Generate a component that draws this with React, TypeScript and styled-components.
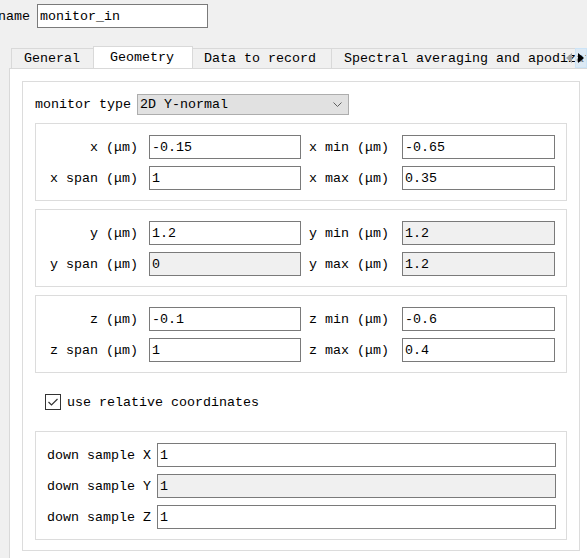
import React from "react";
import styled, { createGlobalStyle } from "styled-components";

const Global = createGlobalStyle`
  html, body { margin: 0; padding: 0; background: #f0f0f0; }
  body { overflow: hidden; }
`;

const Root = styled.div`
  width: 587px;
  height: 558px;
  overflow: hidden;
  background: #f0f0f0;
  font-family: "Liberation Mono", "DejaVu Sans Mono", monospace;
  font-size: 13.33px;
  color: #000;
`;

const NameRow = styled.div`
  display: flex;
  align-items: center;
  gap: 7px;
  padding-top: 4px;
  margin-left: -2px;
`;

const Label = styled.span<{ $align?: "left" | "right" }>`
  white-space: nowrap;
  text-align: ${(p) => p.$align ?? "left"};
`;

const TextInput = styled.div<{ $disabled?: boolean; $width?: number }>`
  box-sizing: border-box;
  height: 24px;
  width: ${(p) => (p.$width ? `${p.$width}px` : "auto")};
  border: 1px solid #7a7a7a;
  background: ${(p) => (p.$disabled ? "#f0f0f0" : "#ffffff")};
  padding: 0 2px;
  display: flex;
  align-items: center;
  white-space: nowrap;
  overflow: hidden;
`;

const TabWidget = styled.div`
  margin-top: 18px;
  margin-left: 9px;
`;

const TabBar = styled.div`
  position: relative;
  width: 578px;
  height: 22px;
  display: flex;
  align-items: flex-end;
  padding-left: 2px;
  box-sizing: border-box;
  overflow: hidden;
`;

const Tab = styled.div<{ $active?: boolean }>`
  position: relative;
  box-sizing: border-box;
  flex: none;
  display: flex;
  align-items: center;
  white-space: nowrap;
  border: 1px solid #d9d9d9;
  border-bottom: none;
  border-right: ${(p) => (p.$active ? "1px solid #d9d9d9" : "none")};
  background: ${(p) => (p.$active ? "#ffffff" : "#f0f0f0")};
  height: ${(p) => (p.$active ? "23px" : "20px")};
  margin: ${(p) => (p.$active ? "0 -2px -1px -2px" : "0")};
  padding: ${(p) => (p.$active ? "0 18px 2px 16px" : "0 15px 0 12px")};
  z-index: ${(p) => (p.$active ? 2 : 1)};
`;

const ScrollArrows = styled.div`
  position: absolute;
  right: 0;
  top: 2px;
  height: 20px;
  display: flex;
  align-items: center;
  z-index: 3;
`;

const ArrowButton = styled.div<{ $hover?: boolean }>`
  box-sizing: border-box;
  width: 12px;
  height: 20px;
  display: flex;
  align-items: center;
  justify-content: center;
  background: ${(p) => (p.$hover ? "rgba(204, 228, 247, 0.55)" : "transparent")};
  border: ${(p) => (p.$hover ? "1px solid #cce4f7" : "none")};
`;

const Pane = styled.div`
  box-sizing: border-box;
  width: 584px;
  border: 1px solid #d9d9d9;
  background: #ffffff;
  padding: 12px;
`;

const Frame = styled.div`
  box-sizing: border-box;
  width: 558px;
  border: 1px solid #dcdcdc;
  padding: 12px 12px 10px 12px;
`;

const TypeRow = styled.div`
  display: flex;
  align-items: center;
  gap: 6px;
  height: 21px;
  margin-bottom: 8px;
`;

const Select = styled.div`
  box-sizing: border-box;
  width: 212px;
  height: 21px;
  border: 1px solid #adadad;
  background: #e1e1e1;
  display: flex;
  align-items: center;
  justify-content: space-between;
  padding: 0 6px 0 2px;
`;

const Group = styled.div`
  border: 1px solid #dcdcdc;
  padding: 11px 10px 10px 11px;
  & + & { margin-top: 8px; }
`;

const CoordGrid = styled.div`
  display: grid;
  grid-template-columns: 94px 152px 85px 153px;
  column-gap: 8px;
  row-gap: 7px;
  align-items: center;
`;

const SampleGrid = styled.div`
  display: grid;
  grid-template-columns: 104px 1fr;
  column-gap: 6px;
  row-gap: 7px;
  align-items: center;
`;

const CheckRow = styled.div`
  display: flex;
  align-items: center;
  gap: 6px;
  padding: 21px 0 21px 10px;
  height: 16px;
`;

const CheckBox = styled.div`
  box-sizing: border-box;
  width: 16px;
  height: 16px;
  border: 1px solid #333333;
  background: #ffffff;
  display: flex;
  align-items: center;
  justify-content: center;
`;

const RightLabel = styled(Label)`
  padding-right: 3px;
`;

type Row = {
  l1: string;
  v1: string;
  d1?: boolean;
  l2: string;
  v2: string;
  d2?: boolean;
};

const groups: Row[][] = [
  [
    { l1: "x (μm)", v1: "-0.15", l2: "x min (μm)", v2: "-0.65" },
    { l1: "x span (μm)", v1: "1", l2: "x max (μm)", v2: "0.35" },
  ],
  [
    { l1: "y (μm)", v1: "1.2", l2: "y min (μm)", v2: "1.2", d2: true },
    { l1: "y span (μm)", v1: "0", d1: true, l2: "y max (μm)", v2: "1.2", d2: true },
  ],
  [
    { l1: "z (μm)", v1: "-0.1", l2: "z min (μm)", v2: "-0.6" },
    { l1: "z span (μm)", v1: "1", l2: "z max (μm)", v2: "0.4" },
  ],
];

const samples = [
  { label: "down sample X", value: "1", disabled: false },
  { label: "down sample Y", value: "1", disabled: true },
  { label: "down sample Z", value: "1", disabled: false },
];

const tabs = ["General", "Geometry", "Data to record", "Spectral averaging and apodization"];

export default function App() {
  return (
    <Root>
      <Global />
      <NameRow>
        <Label>name</Label>
        <TextInput $width={171}>monitor_in</TextInput>
      </NameRow>
      <TabWidget>
        <TabBar>
          {tabs.map((t) => (
            <Tab key={t} $active={t === "Geometry"}>
              {t}
            </Tab>
          ))}
          <ScrollArrows>
            <ArrowButton>
              <svg width="6" height="10" viewBox="0 0 6 10">
                <polygon points="6,0 0,5 6,10" fill="#a0a0a0" />
              </svg>
            </ArrowButton>
            <ArrowButton $hover>
              <svg width="6" height="10" viewBox="0 0 6 10">
                <polygon points="0,0 6,5 0,10" fill="#000000" />
              </svg>
            </ArrowButton>
          </ScrollArrows>
        </TabBar>
        <Pane>
          <Frame>
            <TypeRow>
              <Label>monitor type</Label>
              <Select>
                <span>2D Y-normal</span>
                <svg width="9" height="5" viewBox="0 0 9 5">
                  <polyline points="0.5,0.5 4.5,4.5 8.5,0.5" fill="none" stroke="#606060" strokeWidth="1" />
                </svg>
              </Select>
            </TypeRow>
            {groups.map((rows, gi) => (
              <Group key={gi}>
                <CoordGrid>
                  {rows.map((r) => (
                    <React.Fragment key={r.l1}>
                      <RightLabel $align="right">{r.l1}</RightLabel>
                      <TextInput $disabled={r.d1}>{r.v1}</TextInput>
                      <Label>{r.l2}</Label>
                      <TextInput $disabled={r.d2}>{r.v2}</TextInput>
                    </React.Fragment>
                  ))}
                </CoordGrid>
              </Group>
            ))}
            <CheckRow>
              <CheckBox>
                <svg width="12" height="10" viewBox="0 0 12 10">
                  <polyline points="1.5,5 4.5,8 10.5,2" fill="none" stroke="#333333" strokeWidth="1.2" />
                </svg>
              </CheckBox>
              <Label>use relative coordinates</Label>
            </CheckRow>
            <Group>
              <SampleGrid>
                {samples.map((s) => (
                  <React.Fragment key={s.label}>
                    <Label>{s.label}</Label>
                    <TextInput $disabled={s.disabled}>{s.value}</TextInput>
                  </React.Fragment>
                ))}
              </SampleGrid>
            </Group>
          </Frame>
        </Pane>
      </TabWidget>
    </Root>
  );
}
